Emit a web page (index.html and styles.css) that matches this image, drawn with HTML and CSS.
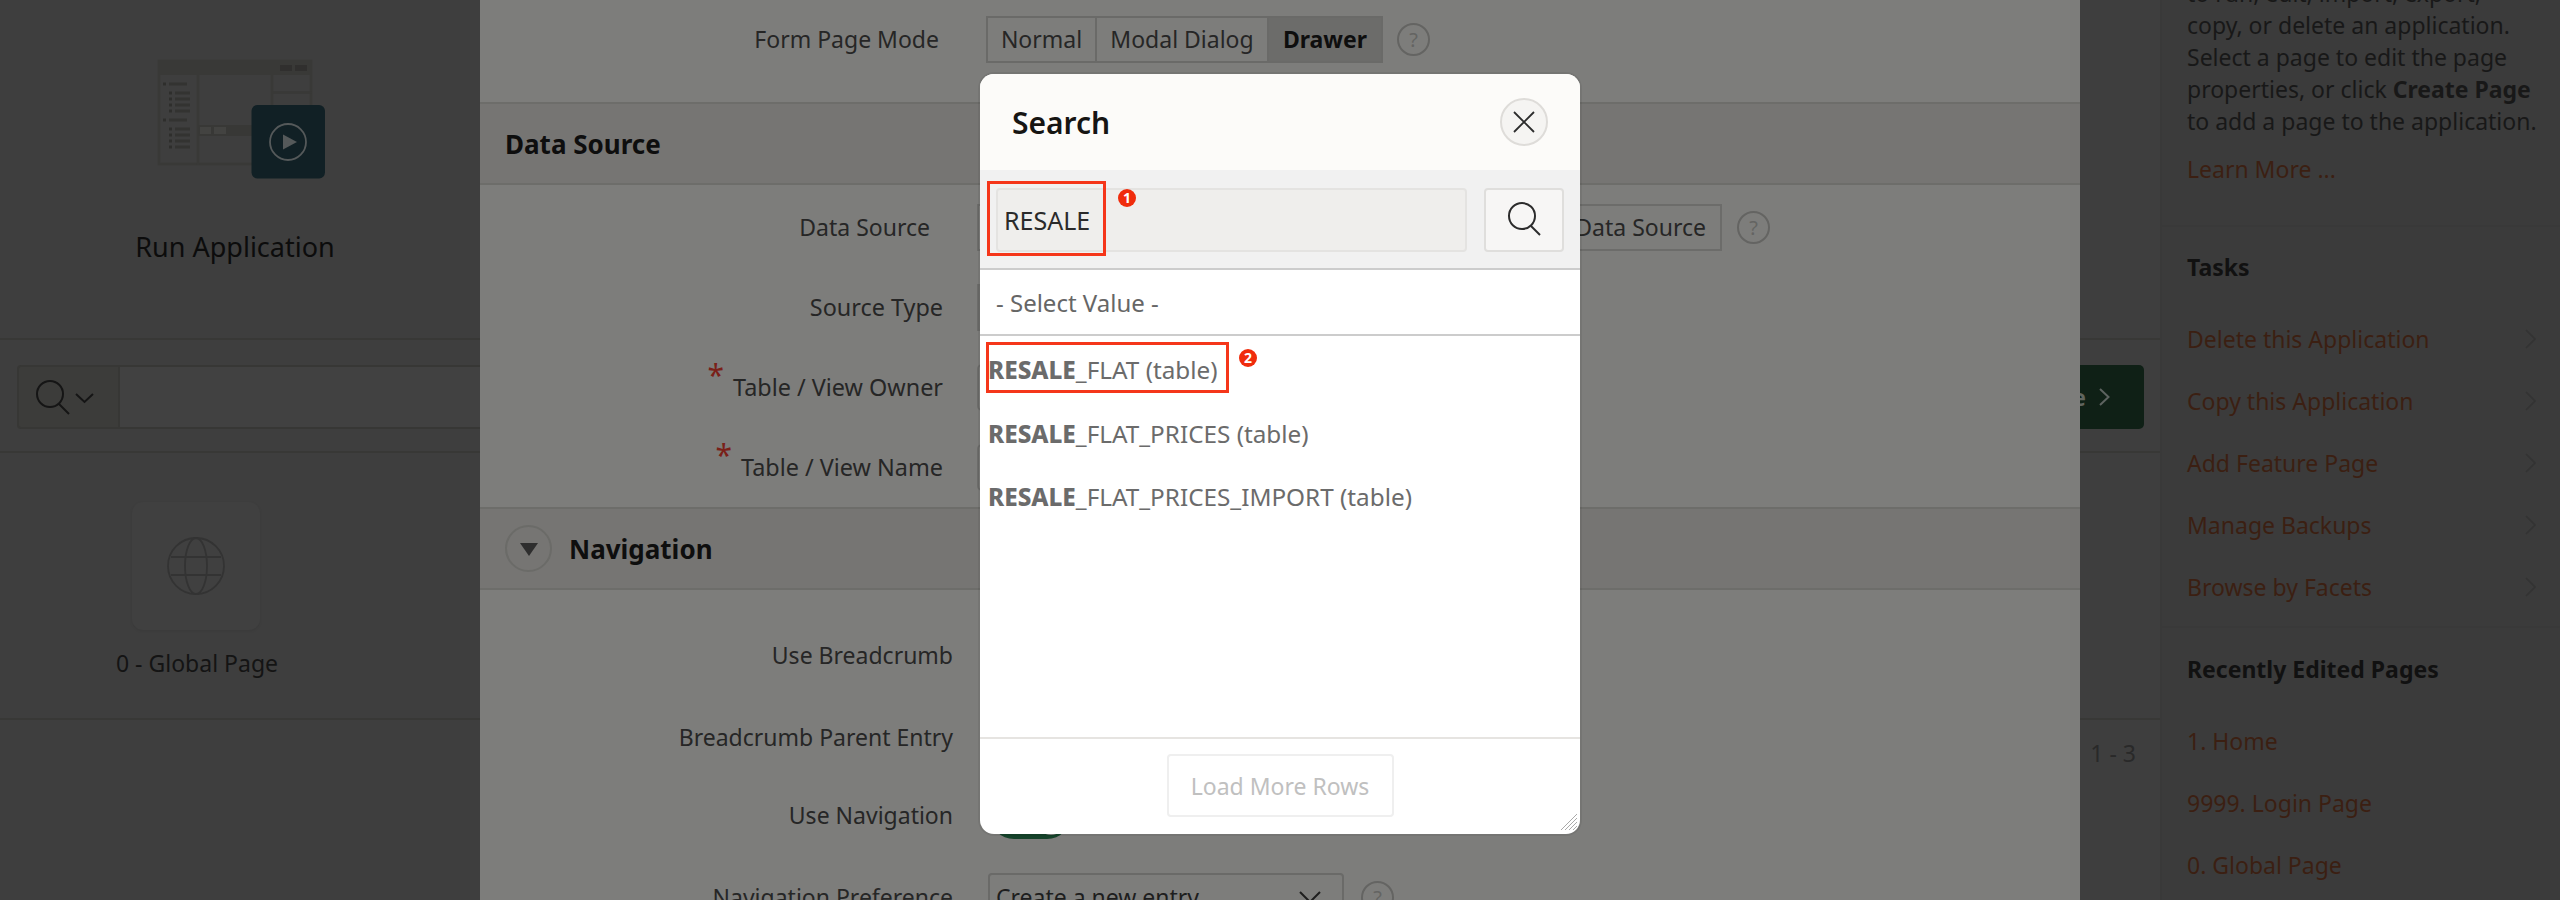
FILE: index.html
```html
<!DOCTYPE html>
<html lang="en">
<head>
  <meta charset="UTF-8" />
  <title>Application Builder</title>
  <link rel="stylesheet" href="styles.css">
</head>
<body>
  <div class="page">
    <main class="main">
      <div class="hero">
        <svg class="run-art" width="182" height="122" viewBox="144 58 182 122">
          <rect x="159" y="61" width="152" height="103" fill="none" stroke="#393937" stroke-width="2.5"/>
          <rect x="159" y="61" width="152" height="14" fill="#393937"/>
          <rect x="280" y="65" width="12" height="6" fill="#302f2e"/>
          <rect x="295" y="65" width="12" height="6" fill="#302f2e"/>
          <path d="M198 75V165M272 75V110M272 92.500H312" stroke="#393937" stroke-width="2.500" fill="none"/>
          <rect x="198" y="125" width="56" height="11" fill="#383836"/>
          <rect x="200" y="127" width="11" height="7" fill="#434341"/>
          <rect x="214" y="127" width="12" height="7" fill="#434341"/>
          <path d="M169 84H187M175 93H190M175 99H190M175 105H190M175 111H190M169 120H187M175 129H190M175 135H190M175 141H190M175 147H190" stroke="#333331" stroke-width="3"/>
          <path d="M163 84H166M169 93H172M169 99H172M169 105H172M169 111H172M163 120H166M169 129H172M169 135H172M169 141H172M169 147H172" stroke="#2e2e2c" stroke-width="3"/>
          <rect x="251.500" y="105" width="73.500" height="73.500" rx="6" fill="#112025"/>
          <circle cx="288" cy="142" r="18" fill="none" stroke="#55595a" stroke-width="1.800"/>
          <path d="M283 134.500V149.500L297 142Z" fill="#55595a"/>
        </svg>
        <div class="hero-title">Run Application</div>
      </div>

      <div class="toolbar">
        <div class="search-type">
          <svg width="64" height="40" viewBox="0 0 64 40" fill="none" stroke="#151515" stroke-width="2">
            <circle cx="16" cy="16" r="13"/>
            <path d="M25 26L35 36M42 16L50.500 24L59 16"/>
          </svg>
        </div>
        <div class="search-input"></div>
        <button class="create-btn">Create Page
          <svg width="11" height="18" viewBox="0 0 11 18" fill="none" stroke="#5d6360" stroke-width="2"><path d="M1 1L9.500 9L1 17"/></svg>
        </button>
      </div>

      <div class="tiles">
        <div class="tile">
          <div class="tile-icon">
            <svg width="60" height="60" viewBox="0 0 60 60" fill="none" stroke="#333" stroke-width="1.800">
              <circle cx="30" cy="30" r="28"/>
              <ellipse cx="30" cy="30" rx="11" ry="28"/>
              <path d="M5 21H55M5 39H55"/>
            </svg>
          </div>
          <div class="tile-label">0 - Global Page</div>
        </div>
      </div>

      <div class="pager">1 - 3</div>
    </main>

    <aside class="side">
      <div class="side-intro">
        <p>to run, edit, import, export,<br>copy, or delete an application.<br>Select a page to edit the page<br>properties, or click <b>Create Page</b><br>to add a page to the application.</p>
        <a class="learn">Learn More ...</a>
      </div>
      <div class="side-tasks">
        <h4>Tasks</h4>
        <ul class="task-list">
          <li>Delete this Application<svg class="chev" width="11" height="20" viewBox="0 0 11 20"><path d="M1 1L10 10L1 19"/></svg></li>
          <li>Copy this Application<svg class="chev" width="11" height="20" viewBox="0 0 11 20"><path d="M1 1L10 10L1 19"/></svg></li>
          <li>Add Feature Page<svg class="chev" width="11" height="20" viewBox="0 0 11 20"><path d="M1 1L10 10L1 19"/></svg></li>
          <li>Manage Backups<svg class="chev" width="11" height="20" viewBox="0 0 11 20"><path d="M1 1L10 10L1 19"/></svg></li>
          <li>Browse by Facets<svg class="chev" width="11" height="20" viewBox="0 0 11 20"><path d="M1 1L10 10L1 19"/></svg></li>
        </ul>
      </div>
      <div class="side-recent">
        <h4>Recently Edited Pages</h4>
        <ul class="task-list">
          <li>1. Home</li>
          <li>9999. Login Page</li>
          <li>0. Global Page</li>
        </ul>
      </div>
    </aside>
  </div>

  <!-- create page drawer -->
  <div class="drawer">
    <div class="row row-mode">
      <label>Form Page Mode</label>
      <div class="seg">
        <span class="seg-item seg-normal">Normal</span>
        <span class="seg-item seg-modal">Modal Dialog</span>
        <span class="seg-item seg-on">Drawer</span>
      </div>
      <span class="help">?</span>
    </div>

    <div class="sec-head"><h3>Data Source</h3></div>
    <div class="sec-body">
      <div class="row row-ds">
        <label>Data Source</label>
        <div class="seg seg-ds"><span>Data Source</span></div>
        <span class="help">?</span>
      </div>
      <div class="row row-std">
        <label>Source Type</label>
        <div class="ctl ctl-flat"></div>
      </div>
      <div class="row row-std">
        <label><i class="req">*</i>Table / View Owner</label>
        <div class="ctl"></div>
      </div>
      <div class="row row-std">
        <label><i class="req">*</i>Table / View Name</label>
        <div class="ctl"></div>
      </div>
    </div>

    <div class="sec-head">
      <span class="collapse"><svg width="18" height="14" viewBox="0 0 18 14"><path d="M0 1H18L9 14Z" fill="#2e2e2e"/></svg></span>
      <h3>Navigation</h3>
    </div>
    <div class="nav-body">
      <div class="row row-nav row-crumb"><label>Use Breadcrumb</label></div>
      <div class="row row-nav row-parent"><label>Breadcrumb Parent Entry</label></div>
      <div class="row row-nav row-usenav">
        <label>Use Navigation</label>
        <div class="toggle"><span class="knob"></span></div>
      </div>
      <div class="row row-nav row-pref">
        <label>Navigation Preference</label>
        <div class="select">
          Create a new entry
          <svg width="22" height="12" viewBox="0 0 22 12" fill="none" stroke="#1e1e1e" stroke-width="2"><path d="M1 1L11 11L21 1"/></svg>
        </div>
        <span class="help">?</span>
      </div>
    </div>
  </div>

  <!-- popup lov -->
  <div class="dialog">
    <div class="dlg-head">
      <h2>Search</h2>
      <span class="dlg-close">
        <svg width="22" height="22" viewBox="0 0 22 22" fill="none" stroke="#2c2c2c" stroke-width="1.800"><path d="M1 1L21 21M21 1L1 21"/></svg>
      </span>
    </div>
    <div class="dlg-search">
      <div class="dlg-input">RESALE</div>
      <span class="dlg-go">
        <svg width="36" height="36" viewBox="0 0 36 36" fill="none" stroke="#2c2c2c" stroke-width="2">
          <circle cx="16" cy="14" r="13"/>
          <path d="M25 24L34 33"/>
        </svg>
      </span>
    </div>
    <div class="dlg-list">
      <div class="opt-blank">- Select Value -</div>
      <div class="opt"><b>RESALE</b>_FLAT (table)</div>
      <div class="opt"><b>RESALE</b>_FLAT_PRICES (table)</div>
      <div class="opt"><b>RESALE</b>_FLAT_PRICES_IMPORT (table)</div>
    </div>
    <div class="dlg-foot">
      <button class="more-btn">Load More Rows</button>
    </div>
    <svg class="grip" width="16" height="16" viewBox="0 0 16 16" stroke="#aaa" stroke-width="1"><path d="M0 16L16 0M4 16L16 4M8 16L16 8M12 16L16 12"/></svg>

    <!-- annotations -->
    <span class="mark mark-input"></span>
    <span class="badge badge-1">1</span>
    <span class="mark mark-opt"></span>
    <span class="badge badge-2">2</span>
  </div>
</body>
</html>
```

FILE: styles.css
```css
html, body {
  margin: 0;
  height: 900px;
  overflow: hidden;
}
body {
  position: relative;
  font-family: "Noto Sans", Arial, sans-serif;
  font-size: 23px;
  background: #3e3e3e;
  color: #181818;
}
h2, h3, h4, p, ul {
  margin: 0;
  padding: 0;
}
.page {
  display: flex;
  width: 2560px;
  height: 900px;
}

/* main column, mostly under the drawer */
.main {
  width: 2160px;
  flex: none;
}
.hero {
  box-sizing: border-box;
  width: 470px;
  height: 338px;
  padding-top: 58px;
  text-align: center;
}
.run-art {
  display: block;
  margin: 0 auto;
}
.hero-title {
  margin-top: 47px;
  font-size: 27px;
  line-height: 40px;
  color: #0c0c0c;
}
.toolbar {
  box-sizing: border-box;
  display: flex;
  height: 115px;
  padding: 25px 16px 0 17px;
  border-top: 2px solid #383836;
  border-bottom: 2px solid #383836;
}
.search-type {
  box-sizing: border-box;
  width: 103px;
  height: 64px;
  padding: 11px 0 0 15px;
  background: #3c3c3a;
  border: 2px solid #373735;
  border-radius: 4px 0 0 4px;
}
.search-input {
  flex: 1;
  height: 64px;
  box-sizing: border-box;
  background: #414141;
  border: 2px solid #373735;
  border-left: 0;
}
.create-btn {
  display: flex;
  align-items: center;
  gap: 13px;
  height: 64px;
  margin-left: 16px;
  padding: 0 34px 0 20px;
  border: 0;
  border-radius: 5px;
  background: #0f2016;
  color: #60655f;
  font: 700 23px "Noto Sans", Arial, sans-serif;
}
.tiles {
  box-sizing: border-box;
  height: 265px;
  padding: 49px 0 0 114px;
}
.tile {
  width: 166px;
  text-align: center;
}
.tile-icon {
  display: flex;
  align-items: center;
  justify-content: center;
  width: 128px;
  height: 128px;
  margin: 0 auto 0 18px;
  background: #404040;
  border-radius: 11px;
  box-shadow: 0 1px 3px rgba(0, 0, 0, 0.08);
}
.tile-label {
  margin-top: 16px;
  line-height: 34px;
  white-space: nowrap;
  color: #141414;
}
.pager {
  border-top: 2px solid #383836;
  padding: 16px 24px 0 0;
  line-height: 34px;
  text-align: right;
  color: #292929;
}

/* right sidebar */
.side {
  box-sizing: border-box;
  flex: none;
  width: 400px;
  height: 900px;
  background: #3b3b3b;
  border-left: 2px solid #393939;
}
.side-intro {
  display: flow-root;
  height: 225px;
  padding-left: 25px;
  border-bottom: 2px solid #393939;
}
.side-intro p {
  margin-top: -23px;
  line-height: 32px;
}
.side-intro b {
  font-weight: 700;
}
.learn {
  display: block;
  margin-top: 15px;
  line-height: 34px;
  color: #3b1f12;
}
.side-tasks {
  box-sizing: border-box;
  display: flow-root;
  height: 401px;
  padding-left: 25px;
  border-bottom: 2px solid #393939;
}
.side-recent {
  display: flow-root;
  padding-left: 25px;
}
h4 {
  font-size: 23px;
  font-weight: 700;
  line-height: 34px;
  color: #111;
}
.side-tasks h4 {
  margin-top: 23px;
}
.side-recent h4 {
  margin-top: 24px;
}
.task-list {
  margin-top: 24px;
  list-style: none;
}
.task-list li {
  display: flex;
  align-items: center;
  justify-content: space-between;
  height: 62px;
  padding-right: 24px;
  color: #3b1f12;
}
.chev {
  fill: none;
  stroke: #333;
  stroke-width: 1.600;
}

/* drawer over the page */
.drawer {
  position: absolute;
  top: 0;
  left: 480px;
  width: 1600px;
  height: 900px;
  background: #7d7d7b;
  color: #262626;
}
.row {
  display: flex;
  align-items: center;
}
.row label {
  box-sizing: border-box;
  flex: none;
  text-align: right;
  white-space: nowrap;
}
.req {
  font-style: normal;
  font-size: 30px;
  line-height: 0;
  color: #7a2018;
  position: relative;
  top: -10px;
  margin-right: 9px;
}
.row-mode {
  height: 78px;
  padding-bottom: 24px;
}
.row-mode label {
  width: 459px;
  margin-right: 47px;
}
.row-ds {
  height: 80px;
}
.row-ds label {
  width: 450px;
  margin-right: 47px;
}
.row-std {
  height: 80px;
}
.row-std label {
  width: 463px;
  margin-right: 34px;
  font-size: 23.400px;
}
.row-nav label {
  width: 473px;
  margin-right: 35px;
}
.sec-head {
  box-sizing: border-box;
  display: flex;
  align-items: center;
  gap: 17px;
  height: 83px;
  padding-left: 25px;
  background: #767573;
  border-top: 2px solid #6d6d6a;
  border-bottom: 2px solid #6d6d6a;
}
.sec-head h3 {
  font-size: 26px;
  font-weight: 700;
  color: #0e0e0e;
}
.collapse {
  box-sizing: border-box;
  display: flex;
  align-items: center;
  justify-content: center;
  width: 47px;
  height: 47px;
  border: 2px solid #6b6b68;
  border-radius: 50%;
}
.sec-body {
  padding-top: 2px;
}
.nav-body {
  padding-top: 25px;
}
.row-crumb {
  height: 80px;
}
.row-parent {
  height: 84px;
}
.row-usenav {
  height: 72px;
}
.row-pref {
  height: 92px;
}

.seg {
  box-sizing: border-box;
  display: flex;
  height: 47px;
  border: 2px solid #6a6a68;
  margin-right: 14px;
}
.seg-item {
  box-sizing: border-box;
  display: flex;
  align-items: center;
  justify-content: center;
  border-right: 2px solid #6a6a68;
}
.seg-normal {
  width: 109px;
}
.seg-modal {
  width: 172px;
}
.seg-on {
  width: 112px;
  border-right: 0;
  background: #6c6c6a;
  font-weight: 700;
  color: #0e0e0e;
}
.seg-ds {
  width: 745px;
  justify-content: flex-end;
  align-items: center;
  padding-right: 14px;
  margin-right: 15px;
  border-color: #6c6c6a;
}
.ctl {
  box-sizing: border-box;
  width: 320px;
  height: 47px;
  border: 2px solid #6c6c6a;
  border-radius: 5px;
}
.ctl-flat {
  border-radius: 0;
  background: #6e6e6c;
}
.help {
  box-sizing: border-box;
  display: flex;
  align-items: center;
  justify-content: center;
  width: 33px;
  height: 33px;
  border: 2px solid #646462;
  border-radius: 50%;
  font-size: 20px;
  color: #646462;
}
.toggle {
  box-sizing: border-box;
  width: 81px;
  height: 48px;
  margin-left: 2px;
  padding: 3px 6px 0 47px;
  background: #15422a;
  border-radius: 24px;
}
.knob {
  display: block;
  width: 28px;
  height: 41px;
  background: #8a8a88;
  border-radius: 14px;
}
.select {
  box-sizing: border-box;
  display: flex;
  align-items: center;
  justify-content: space-between;
  width: 356px;
  height: 48px;
  margin-right: 17px;
  padding: 0 21px 0 6px;
  border: 2px solid #6a6a68;
  border-radius: 4px;
  color: #1e1e1e;
}

/* search popup */
.dialog {
  position: absolute;
  top: 74px;
  left: 980px;
  display: flex;
  flex-direction: column;
  width: 600px;
  height: 760px;
  border-radius: 14px;
  overflow: hidden;
  background: #fff;
  font-size: 24px;
  box-shadow: 0 0 0 2px rgba(0, 0, 0, 0.06);
}
.dlg-head {
  box-sizing: border-box;
  flex: none;
  display: flex;
  align-items: center;
  justify-content: space-between;
  height: 96px;
  padding: 0 32px;
  background: #fcfbf9;
}
.dlg-head h2 {
  font-size: 30px;
  font-weight: 600;
  color: #161513;
}
.dlg-close {
  box-sizing: border-box;
  display: flex;
  align-items: center;
  justify-content: center;
  width: 48px;
  height: 48px;
  background: #f5f4f2;
  border: 2px solid #dedcd9;
  border-radius: 50%;
}
.dlg-search {
  box-sizing: border-box;
  flex: none;
  display: flex;
  gap: 17px;
  height: 100px;
  padding: 18px 16px 0 16px;
  background: #f1f1f1;
  border-bottom: 2px solid #ccc;
}
.dlg-input {
  box-sizing: border-box;
  flex: 1;
  height: 64px;
  padding-left: 6px;
  line-height: 60px;
  font-size: 25px;
  background: #efeeec;
  border: 2px solid #e4e3e1;
  border-radius: 4px;
  color: #2a2a2a;
}
.dlg-go {
  box-sizing: border-box;
  display: flex;
  align-items: center;
  justify-content: center;
  width: 80px;
  height: 64px;
  background: #f7f6f5;
  border: 2px solid #dfdedc;
  border-radius: 4px;
}
.dlg-list {
  flex: 1;
}
.opt-blank {
  box-sizing: border-box;
  height: 66px;
  padding: 16px 0 0 16px;
  line-height: 34px;
  border-bottom: 2px solid #ccc;
  color: #666;
}
.opt {
  height: 63.500px;
  padding-left: 8px;
  line-height: 67px;
  font-size: 24.300px;
  color: #6b6b6b;
}
.opt b {
  font-weight: 800;
}
.dlg-foot {
  box-sizing: border-box;
  flex: none;
  display: flex;
  justify-content: center;
  height: 97px;
  padding-top: 15px;
  border-top: 2px solid #e6e4e1;
}
.more-btn {
  width: 227px;
  height: 63px;
  padding: 0;
  background: #fff;
  border: 2px solid #efefef;
  border-radius: 4px;
  color: #c0c0c0;
  font: 23px "Noto Sans", Arial, sans-serif;
}
.grip {
  position: absolute;
  right: 3px;
  bottom: 4px;
}
.mark {
  box-sizing: border-box;
  position: absolute;
  border: 3px solid #f5361a;
}
.mark-input {
  top: 107px;
  left: 7px;
  width: 119px;
  height: 75px;
}
.mark-opt {
  top: 268px;
  left: 6px;
  width: 243px;
  height: 51px;
}
.badge {
  position: absolute;
  width: 18px;
  height: 18px;
  border-radius: 50%;
  background: #f02c0c;
  color: #fff;
  font-size: 14px;
  font-weight: 700;
  line-height: 18px;
  text-align: center;
}
.badge-1 {
  top: 115px;
  left: 138px;
}
.badge-2 {
  top: 275px;
  left: 259px;
}
```
